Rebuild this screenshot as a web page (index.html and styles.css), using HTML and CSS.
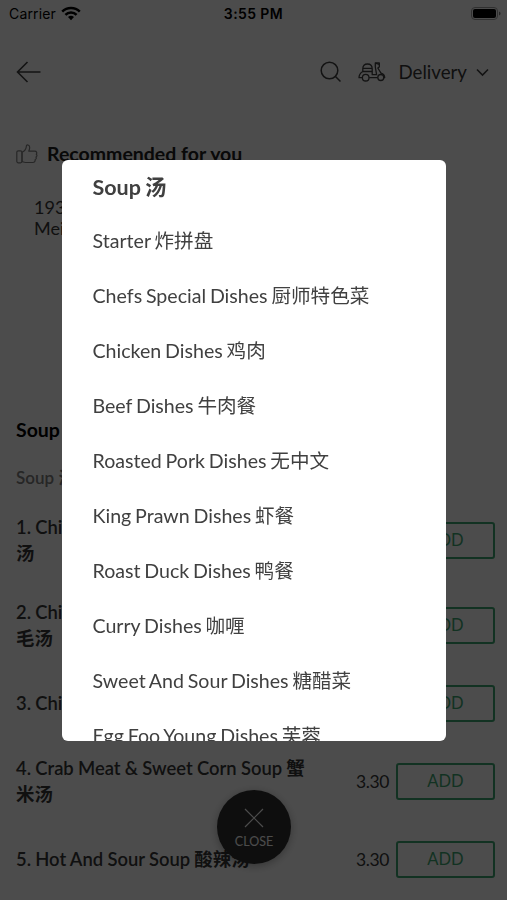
FILE: index.html
```html
<!DOCTYPE html>
<html lang="en">

<head>
  <meta charset="UTF-8">
  <meta name="viewport" content="width=device-width, initial-scale=1.0" />
  <title>Menu</title>
  <link rel="stylesheet" href="styles.css">
</head>

<body>

  <div class="page">
    <div class="status-bar">
      <div class="carrier">
        <span>Carrier</span>
        <svg width="20" height="15" viewBox="0 0 20 15" fill="none" stroke="#000" stroke-width="2.5">
          <path d="M1.2 5.6a12.4 12.4 0 0 1 17.6 0M4.4 8.9a7.8 7.8 0 0 1 11.2 0" />
          <path d="M10 14.2l-3-3.1a4.3 4.3 0 0 1 6 0z" fill="#000" stroke="none" />
        </svg>
      </div>
      <div class="time">3:55 PM</div>
      <svg class="battery" width="30" height="14" viewBox="0 0 30 14">
        <rect x="0.5" y="0.5" width="26" height="12" rx="3.5" fill="none" stroke="#a0a0a0" />
        <rect x="2" y="2" width="23" height="9" rx="2" fill="#000" />
        <path d="M28 4.6v4q1.6-.6 1.6-2t-1.6-2z" fill="#808080" />
      </svg>
    </div>

    <div class="header">
      <svg width="26" height="22" viewBox="0 0 26 22" fill="none" stroke="#404040" stroke-width="1.6">
        <path d="M24.5 11H1.5M11.5 1L1.5 11l10 10" />
      </svg>
      <div class="header-right">
        <svg class="search" width="22" height="22" viewBox="0 0 22 22" fill="none" stroke="#404040" stroke-width="1.5">
          <circle cx="9.5" cy="9.5" r="8.3" />
          <path d="M15.5 15.5l5 5" />
        </svg>
        <svg class="scooter" width="28" height="20" viewBox="0 0 28 20" fill="none" stroke="#404040" stroke-width="1.3" stroke-linejoin="round">
          <path d="M4.8 9.5V6.8q0-4.8 4.7-4.8t4.7 4.8v2.7zM4.8 6.3h9.4" />
          <path d="M4.8 9.5C2.2 11 1 13 1 15.7h3.2M11.2 15.7h8.5M14.2 9.5v3.2h4.4L17.3 5V1h4v4l-1.5 1 3.2 5.2c2.4.6 3.6 2.1 3.7 4.3h-1" />
          <path d="M17.3 1.2l4 1.3" />
          <circle cx="7.7" cy="15.7" r="3.3" />
          <circle cx="22.8" cy="15.5" r="3" />
        </svg>
        <span class="mode">Delivery</span>
        <svg width="13" height="9" viewBox="0 0 13 9" fill="none" stroke="#404040" stroke-width="1.6">
          <path d="M1 1.5l5.5 5.5L12 1.5" />
        </svg>
      </div>
    </div>

    <div class="recommended">
      <svg width="22" height="20" viewBox="0 0 22 20" fill="none" stroke="#808080" stroke-width="1.2" stroke-linejoin="round">
        <path d="M6 8.2c3-1.2 4.2-3.4 4.4-6.2C10.5.3 13.7.6 13.7 3.5c0 1.4-.4 2.5-.9 3.6h5.8c2.2 0 2.7 1.9 1.7 3.1 1 .9.8 2.3-.3 2.9.6 1.1.2 2.2-.9 2.6.3 1.4-.5 2.8-2.3 2.8H9.7c-1.4 0-2.3-.4-3.7-.9z" />
        <rect x="0.8" y="6.8" width="5.2" height="12" rx="1.5" />
      </svg>
      <h2>Recommended for you</h2>
    </div>
    <div class="card">193.<br>Mei</div>

    <h3>Soup 汤</h3>
    <div class="subtitle">Soup 汤</div>

    <div class="item">
      <div class="name">1. Chicken<br>汤</div>
      <div class="price">3.30</div>
      <div class="add">ADD</div>
    </div>
    <div class="item">
      <div class="name">2. Chicken<br>毛汤</div>
      <div class="price">3.30</div>
      <div class="add">ADD</div>
    </div>
    <div class="item">
      <div class="name">3. Chicken</div>
      <div class="price">3.30</div>
      <div class="add">ADD</div>
    </div>
    <div class="item">
      <div class="name">4. Crab Meat &amp; Sweet Corn Soup 蟹<br>米汤</div>
      <div class="price">3.30</div>
      <div class="add">ADD</div>
    </div>
    <div class="item">
      <div class="name">5. Hot And Sour Soup 酸辣汤</div>
      <div class="price">3.30</div>
      <div class="add">ADD</div>
    </div>

    <div class="close-btn">
      <svg width="20" height="20" viewBox="0 0 20 20" fill="none" stroke="#fff" stroke-width="1.2">
        <path d="M1 1l18 18M19 1L1 19" />
      </svg>
      <span>CLOSE</span>
    </div>
  </div>

  <div class="overlay">
    <div class="modal">
      <div class="category active">Soup 汤</div>
      <div class="category">Starter 炸拼盘</div>
      <div class="category">Chefs Special Dishes 厨师特色菜</div>
      <div class="category">Chicken Dishes 鸡肉</div>
      <div class="category">Beef Dishes 牛肉餐</div>
      <div class="category">Roasted Pork Dishes 无中文</div>
      <div class="category">King Prawn Dishes 虾餐</div>
      <div class="category">Roast Duck Dishes 鸭餐</div>
      <div class="category">Curry Dishes 咖喱</div>
      <div class="category">Sweet And Sour Dishes 糖醋菜</div>
      <div class="category">Egg Foo Young Dishes 芙蓉</div>
    </div>
  </div>

</body>

</html>
```
FILE: styles.css
```css
:root {
  --text-color: #383838;
  --green: #3fa873;
  --font-family: Lato, 'Noto Sans CJK SC', sans-serif;
}

* {
  margin: 0;
  padding: 0;
  box-sizing: border-box;
}

body {
  height: 900px;
  overflow: hidden;
  background: #fff;
  font-family: var(--font-family);
  color: var(--text-color);
}

.page {
  height: 900px;
  overflow: hidden;
}

svg {
  display: block;
  flex-shrink: 0;
}

.status-bar {
  height: 27px;
  padding: 0 6px 0 9px;
  display: grid;
  grid-template-columns: 1fr auto 1fr;
  align-items: center;
  font-family: Inter, sans-serif;
  font-size: 14px;
  color: #000;
}

.carrier {
  display: flex;
  align-items: center;
  gap: 5px;
  letter-spacing: 0.15px;
}

.time {
  font-weight: 600;
  letter-spacing: 0.4px;
  margin-right: 3px;
}

.battery {
  justify-self: end;
}

.header {
  height: 89px;
  padding: 1px 18px 0 16px;
  display: flex;
  align-items: center;
  justify-content: space-between;
}

.header-right {
  display: flex;
  align-items: center;
}

.scooter {
  margin: 0 12px 0 16px;
}

.mode {
  font-size: 18.7px;
  margin-right: 9px;
}

.recommended {
  height: 60px;
  padding: 15px 16px 0;
  display: flex;
  align-items: center;
  gap: 9px;
}

h2 {
  font-size: 19.5px;
  color: #202020;
}

.card {
  height: 192px;
  margin: 0 26px 0 16px;
  padding: 21px 18px;
  background: #fdfdfd;
  font-size: 18px;
  line-height: 20.5px;
}

h3 {
  margin: 50px 16px 0;
  font-size: 19.5px;
  line-height: 24px;
  color: #000;
}

.subtitle {
  margin: 24px 16px 8px;
  font-size: 17px;
  line-height: 24px;
  font-weight: 600;
  color: #808080;
}

.item {
  padding: 17px 12px 17px 16px;
  display: flex;
  align-items: center;
}

.name {
  flex: 1;
  font-size: 18.4px;
  font-weight: 600;
  line-height: 25.5px;
  word-spacing: -0.3px;
  white-space: nowrap;
}

.price {
  font-size: 17.5px;
  letter-spacing: -0.4px;
  margin-right: 7px;
}

.add {
  width: 99px;
  height: 37px;
  border: 2px solid var(--green);
  border-radius: 3px;
  color: var(--green);
  font-size: 16.5px;
  line-height: 33px;
  text-align: center;
}

/* floating button under the dimmed layer */
.close-btn {
  position: absolute;
  left: 217px;
  top: 790px;
  width: 74px;
  height: 74px;
  padding-top: 18px;
  border-radius: 50%;
  background: #303030;
  box-shadow: 0 2px 8px rgba(0, 0, 0, 0.3);
  color: #fff;
  font-size: 12.5px;
  display: flex;
  flex-direction: column;
  align-items: center;
  gap: 6px;
}

.overlay {
  position: fixed;
  inset: 0;
  background: rgba(0, 0, 0, 0.7);
  display: flex;
  justify-content: center;
  align-items: center;
}

.modal {
  width: 384px;
  height: 581px;
  margin-top: 1px;
  overflow: hidden;
  background: #fff;
  border-radius: 6px;
}

.category {
  height: 55px;
  padding-left: 31px;
  font-size: 19.6px;
  line-height: 55px;
  word-spacing: -1.2px;
  color: #404040;
  white-space: nowrap;
}

.category.active {
  height: 53px;
  line-height: 54px;
  font-size: 21.5px;
  font-weight: 700;
}
```
